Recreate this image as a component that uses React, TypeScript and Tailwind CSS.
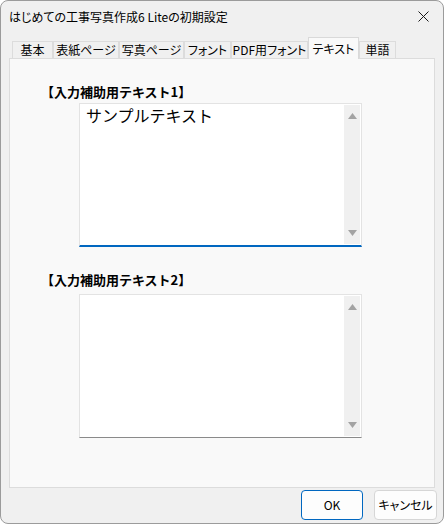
import React from "react";

const tabs = [
  { label: "基本", w: "w-[41px]" },
  { label: "表紙ページ", w: "w-[66px]" },
  { label: "写真ページ", w: "w-[65px]" },
  { label: "フォント", w: "w-[47px]" },
  { label: "PDF用フォント", w: "w-[77px]" },
  { label: "テキスト", w: "w-[51px]", active: true },
  { label: "単語", w: "w-[37px]" },
];

function TextBox({ text, focused }: { text?: string; focused?: boolean }) {
  return (
    <div
      className={`ml-[69px] flex h-[144px] w-[283px] border border-[#e3e3e3] bg-white ${
        focused ? "border-b-2 border-b-[#0067c0]" : "border-b-[#8a8a8a]"
      }`}
    >
      <div className="flex-1 px-[6px] pt-[1px] text-[16px] leading-[20px] text-black">{text}</div>
      <div className="my-[1px] mr-[1px] flex w-[16px] flex-col items-center justify-between bg-[#f0f0f0] py-[8px]">
        <svg width="9" height="6" viewBox="0 0 9 6">
          <path d="M4.5 0L9 6H0z" fill="#a3a3a3" />
        </svg>
        <svg width="9" height="6" viewBox="0 0 9 6">
          <path d="M0 0h9L4.5 6z" fill="#a3a3a3" />
        </svg>
      </div>
    </div>
  );
}

export default function App() {
  return (
    <div className="h-[525px] w-[444px] bg-white font-['Noto_Sans_CJK_JP',sans-serif]">
      <div className="flex h-[524px] w-[444px] flex-col rounded-[8px] border border-[#9b9b9b] bg-[#f0f0f0]">
        <div className="flex h-[31px] items-center justify-between pl-[8px] pr-[14px]">
          <span className="text-[12px] text-black [font-feature-settings:'palt']">
            はじめての工事写真作成6 Liteの初期設定
          </span>
          <svg width="11" height="11" viewBox="0 0 11 11">
            <path d="M0.5 0.5l10 10M10.5 0.5l-10 10" stroke="#1a1a1a" strokeWidth="1" />
          </svg>
        </div>
        <div className="flex h-[26px] items-end pl-[11px]">
          {tabs.map((t) =>
            t.active ? (
              <div
                key={t.label}
                className={`${t.w} relative z-10 -mb-px flex h-[22px] items-start justify-center border border-b-0 border-[#d9d9d9] bg-[#f9f9f9] pt-[2px] text-[12px] text-black [font-feature-settings:'palt']`}
              >
                {t.label}
              </div>
            ) : (
              <div
                key={t.label}
                className={`${t.w} flex h-[17px] items-center justify-center border border-b-0 border-[#dcdcdc] bg-[#f0f0f0] text-[12px] leading-none text-black [font-feature-settings:'palt']`}
              >
                {t.label}
              </div>
            )
          )}
        </div>
        <div className="mx-[8px] flex h-[430px] flex-col border border-[#dcdcdc] bg-[#f9f9f9]">
          <div className="ml-[31px] mt-[24px] text-[13px] font-bold leading-[18px] text-black">
            【入力補助用テキスト1】
          </div>
          <div className="mt-[2px]">
            <TextBox text="サンプルテキスト" focused />
          </div>
          <div className="ml-[31px] mt-[24px] text-[13px] font-bold leading-[18px] text-black">
            【入力補助用テキスト2】
          </div>
          <div className="mt-[5px]">
            <TextBox />
          </div>
        </div>
        <div className="flex justify-end gap-[11px] pr-[6px] pt-[2px]">
          <button className="h-[30px] w-[62px] rounded-[4px] border border-[#0067c0] bg-[#fdfdfd] text-[12px] text-black">
            OK
          </button>
          <button className="h-[30px] w-[63px] rounded-[4px] border border-[#d6d6d6] bg-[#fdfdfd] text-[12px] text-black [font-feature-settings:'palt']">
            キャンセル
          </button>
        </div>
      </div>
    </div>
  );
}
